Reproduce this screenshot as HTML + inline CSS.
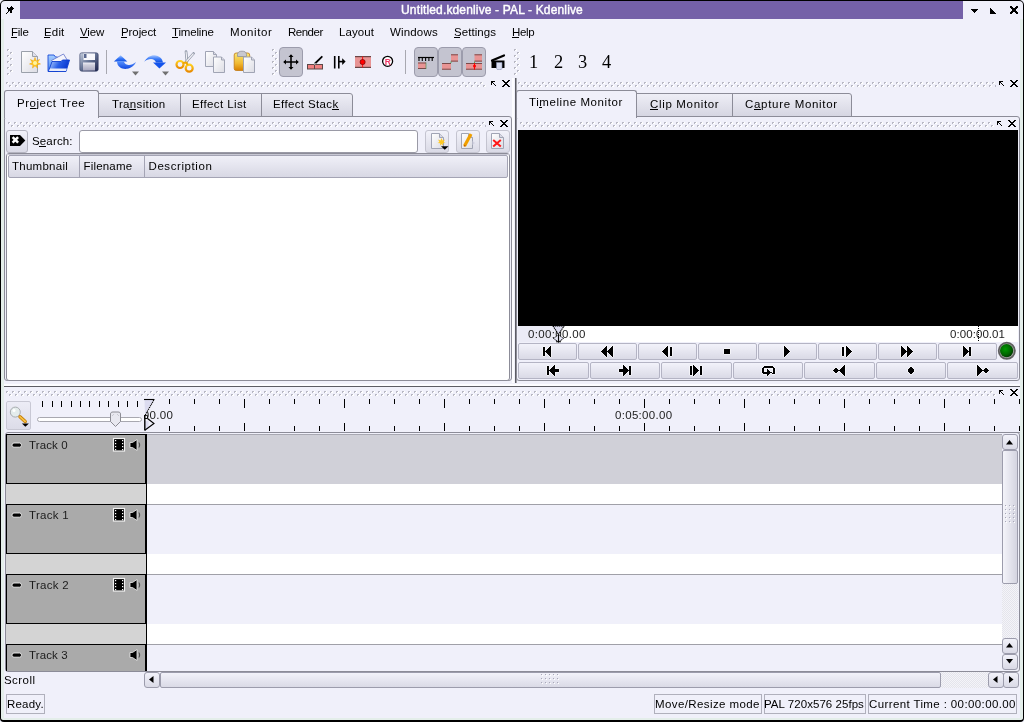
<!DOCTYPE html><html><head><meta charset="utf-8"><style>
html,body{margin:0;padding:0;}body{width:1024px;height:722px;overflow:hidden;position:relative;background:#f0f0fa;font-family:"Liberation Sans", sans-serif;}
div,svg{position:absolute;}
.t{white-space:nowrap;}
.btn{box-sizing:border-box;border:1px solid #a8a8b8;border-radius:2px;background:linear-gradient(#f2f2fa,#dadae6);}
.tab{box-sizing:border-box;border:1px solid #8c8c98;background:linear-gradient(#eeeef6,#d6d6e2);}
</style></head><body><div id="root" style="left:0;top:0;width:1024px;height:722px;overflow:hidden;will-change:transform;">
<svg width="0" height="0" style="position:absolute">
<defs>
<pattern id="dh" width="6" height="6" patternUnits="userSpaceOnUse">
<path d="M0 0h2v1h-1v1h-1z" fill="#b8b8c4"/><path d="M1 2h2v-2h-1v1h-1z" fill="#ffffff"/>
<path d="M3 3h2v1h-1v1h-1z" fill="#b8b8c4"/><path d="M4 5h2v-2h-1v1h-1z" fill="#ffffff"/>
</pattern>
<pattern id="chk" width="2" height="2" patternUnits="userSpaceOnUse">
<rect width="2" height="2" fill="#f4f4f8"/><rect width="1" height="1" fill="#e4e4ec"/><rect x="1" y="1" width="1" height="1" fill="#e4e4ec"/>
</pattern>
<pattern id="grip" width="4" height="4" patternUnits="userSpaceOnUse">
<rect width="1" height="1" fill="#a8a8b8"/><rect x="1" y="1" width="1" height="1" fill="#fff"/>
</pattern>
<linearGradient id="gBlue" x1="0" y1="0" x2="0" y2="1"><stop offset="0" stop-color="#a8c8ff"/><stop offset="0.5" stop-color="#3c7cf8"/><stop offset="1" stop-color="#1050e0"/></linearGradient>
<linearGradient id="gBlue2" x1="0" y1="0" x2="0" y2="1"><stop offset="0" stop-color="#5a94ff"/><stop offset="1" stop-color="#1048e0"/></linearGradient>
<linearGradient id="gFback" x1="0" y1="0" x2="0" y2="1"><stop offset="0" stop-color="#a8d0ff"/><stop offset="1" stop-color="#4a86f0"/></linearGradient>
<linearGradient id="gFront" x1="0" y1="0" x2="1" y2="0.3"><stop offset="0" stop-color="#c8e0ff"/><stop offset="0.55" stop-color="#2a60e8"/><stop offset="1" stop-color="#0a38d0"/></linearGradient>
<linearGradient id="gDisk" x1="0" y1="0" x2="1" y2="1"><stop offset="0" stop-color="#c8d0e0"/><stop offset="0.45" stop-color="#6a7898"/><stop offset="1" stop-color="#1a2048"/></linearGradient>
<linearGradient id="gShut" x1="0" y1="0" x2="0" y2="1"><stop offset="0" stop-color="#f0f0f8"/><stop offset="0.3" stop-color="#d0d0dc"/><stop offset="1" stop-color="#a8a8c0"/></linearGradient>
<linearGradient id="gPage" x1="0" y1="0" x2="1" y2="1"><stop offset="0" stop-color="#ffffff"/><stop offset="1" stop-color="#dcdce4"/></linearGradient>
<linearGradient id="gOrange" x1="0" y1="0" x2="0" y2="1"><stop offset="0" stop-color="#ffd020"/><stop offset="1" stop-color="#e88a00"/></linearGradient>
<linearGradient id="gClip" x1="0" y1="0" x2="0" y2="1"><stop offset="0" stop-color="#f8e878"/><stop offset="0.6" stop-color="#f0b830"/><stop offset="1" stop-color="#d88000"/></linearGradient>
<linearGradient id="gFolder" x1="0" y1="0" x2="0" y2="1"><stop offset="0" stop-color="#c8dcff"/><stop offset="0.5" stop-color="#2a6ae8"/><stop offset="1" stop-color="#a8c4f8"/></linearGradient>
<radialGradient id="gLed" cx="0.4" cy="0.38" r="0.62"><stop offset="0" stop-color="#009a00"/><stop offset="0.7" stop-color="#006400"/><stop offset="1" stop-color="#003c00"/></radialGradient>
</defs></svg>
<div style="position:absolute;left:20px;top:1px;width:943px;height:18px;background:#7561a8;"></div>
<div class="t" style="left:401px;top:4px;font-size:12px;line-height:12px;color:#fff;letter-spacing:0.152px;-webkit-text-stroke:0.4px #fff;">Untitled.kdenlive - PAL - Kdenlive</div>
<svg style="position:absolute;left:6px;top:6px" width="8" height="8" shape-rendering="crispEdges"><path d="M5 0h1v1h-1zM1 1h1v1h-1zM4 1h3v1h-3zM1 2h7v1h-7zM2 3h5v1h-5zM2 4h4v1h-4zM2 5h1v1h-1zM4 5h2v1h-2zM1 6h1v1h-1zM4 6h2v1h-2zM0 7h1v1h-1z" fill="#000"/></svg>
<svg style="position:absolute;left:971px;top:9px" width="7" height="4" shape-rendering="crispEdges"><path d="M0 0h7v1h-7zM1 1h5v1h-5zM2 2h3v1h-3zM3 3h1v1h-1z" fill="#000"/></svg>
<svg style="position:absolute;left:990px;top:8px" width="6" height="6" shape-rendering="crispEdges"><path d="M0 0h1v1h-1zM0 1h2v1h-2zM0 2h3v1h-3zM0 3h4v1h-4zM0 4h5v1h-5zM0 5h6v1h-6z" fill="#000"/></svg>
<svg style="position:absolute;left:1010px;top:6px" width="8" height="8" shape-rendering="crispEdges"><path d="M0 0h2v1h-2zM6 0h2v1h-2zM0 1h3v1h-3zM5 1h3v1h-3zM1 2h6v1h-6zM2 3h4v1h-4zM2 4h4v1h-4zM1 5h6v1h-6zM0 6h3v1h-3zM5 6h3v1h-3zM0 7h2v1h-2zM6 7h2v1h-2z" fill="#000"/></svg>
<div class="t" style="left:11px;top:27px;font-size:11.5px;line-height:11.5px;color:#000;letter-spacing:-0.25px;">File</div>
<div style="position:absolute;left:11px;top:37px;width:6px;height:1px;background:#000;"></div>
<div class="t" style="left:44px;top:27px;font-size:11.5px;line-height:11.5px;color:#000;letter-spacing:0.167px;">Edit</div>
<div style="position:absolute;left:44px;top:37px;width:6px;height:1px;background:#000;"></div>
<div class="t" style="left:80px;top:27px;font-size:11.5px;line-height:11.5px;color:#000;letter-spacing:-0.167px;">View</div>
<div style="position:absolute;left:80px;top:37px;width:8px;height:1px;background:#000;"></div>
<div class="t" style="left:121px;top:27px;font-size:11.5px;line-height:11.5px;color:#000;letter-spacing:-0.083px;">Project</div>
<div style="position:absolute;left:121px;top:37px;width:6px;height:1px;background:#000;"></div>
<div class="t" style="left:172px;top:27px;font-size:11.5px;line-height:11.5px;color:#000;letter-spacing:-0.179px;">Timeline</div>
<div style="position:absolute;left:172px;top:37px;width:6px;height:1px;background:#000;"></div>
<div class="t" style="left:230px;top:27px;font-size:11.5px;line-height:11.5px;color:#000;letter-spacing:0.567px;">Monitor</div>
<div class="t" style="left:288px;top:27px;font-size:11.5px;line-height:11.5px;color:#000;letter-spacing:-0.5px;">Render</div>
<div class="t" style="left:339px;top:27px;font-size:11.5px;line-height:11.5px;color:#000;letter-spacing:0.1px;">Layout</div>
<div class="t" style="left:390px;top:27px;font-size:11.5px;line-height:11.5px;color:#000;letter-spacing:0.167px;">Windows</div>
<div class="t" style="left:454px;top:27px;font-size:11.5px;line-height:11.5px;color:#000;letter-spacing:0.071px;">Settings</div>
<div style="position:absolute;left:454px;top:37px;width:6px;height:1px;background:#000;"></div>
<div class="t" style="left:512px;top:27px;font-size:11.5px;line-height:11.5px;color:#000;letter-spacing:-0.333px;">Help</div>
<div style="position:absolute;left:512px;top:37px;width:7px;height:1px;background:#000;"></div>
<svg style="position:absolute;left:7px;top:49px" width="6" height="27"><rect width="6" height="27" fill="url(#dh)"/></svg>
<svg style="position:absolute;left:272px;top:49px" width="6" height="27"><rect width="6" height="27" fill="url(#dh)"/></svg>
<svg style="position:absolute;left:514px;top:49px" width="6" height="27"><rect width="6" height="27" fill="url(#dh)"/></svg>
<div style="position:absolute;left:106px;top:50px;width:1px;height:24px;background:#a8a8b0;"></div>
<div style="position:absolute;left:405px;top:50px;width:1px;height:24px;background:#a8a8b0;"></div>
<div style="position:absolute;left:279px;top:47px;width:24px;height:30px;box-sizing:border-box;border:1px solid #9c9cac;border-radius:4px;background:#c4c4d0;"></div>
<div style="position:absolute;left:414px;top:47px;width:24px;height:30px;box-sizing:border-box;border:1px solid #9c9cac;border-radius:4px;background:#c4c4d0;"></div>
<div style="position:absolute;left:438px;top:47px;width:24px;height:30px;box-sizing:border-box;border:1px solid #9c9cac;border-radius:4px;background:#c4c4d0;"></div>
<div style="position:absolute;left:462px;top:47px;width:24px;height:30px;box-sizing:border-box;border:1px solid #9c9cac;border-radius:4px;background:#c4c4d0;"></div>
<div class="t" style="left:529px;top:53px;font-size:18.4px;line-height:18.4px;color:#000;letter-spacing:0px;font-family:'Liberation Serif',serif;">1</div>
<div class="t" style="left:554px;top:53px;font-size:18.4px;line-height:18.4px;color:#000;letter-spacing:0px;font-family:'Liberation Serif',serif;">2</div>
<div class="t" style="left:578px;top:53px;font-size:18.4px;line-height:18.4px;color:#000;letter-spacing:0px;font-family:'Liberation Serif',serif;">3</div>
<div class="t" style="left:602px;top:53px;font-size:18.4px;line-height:18.4px;color:#000;letter-spacing:0px;font-family:'Liberation Serif',serif;">4</div>
<svg style="position:absolute;left:20px;top:50px;" width="22" height="24" viewBox="0 0 22 24"><path d="M1.5 1.5H12.5L17.5 6.5V22.5H1.5Z" fill="url(#gPage)" stroke="#9aa0aa"/><path d="M12.5 1.5V6.5H17.5" fill="#e0e0ec" stroke="#9aa0aa"/><g transform="translate(15 13)"><path d="M0 -5.5L1.2 -2 4.5 -3.5 2.5 -0.5 5.5 1 2 1.8 2.5 5 0 2.8 -2.5 5 -2 1.8 -5.5 1 -2.5 -0.5 -4.5 -3.5 -1.2 -2Z" fill="#ffc820" stroke="#f0a000" stroke-width="0.5"/><circle r="2" fill="#fff4a0"/></g></svg>
<svg style="position:absolute;left:47px;top:52px;" width="25" height="22" viewBox="0 0 25 22"><path d="M1 3H7L8.5 5H10.5V19.5H1Z" fill="url(#gFback)" stroke="#1a4ad8" stroke-width="0.9"/><path d="M4.5 8.5L16.5 2L20.5 8.5L10 14Z" fill="#f4f4fc" stroke="#6070c8" stroke-width="0.8"/><path d="M5 9.5H14L15.5 8H22.5L19 19.5H1.5Z" fill="url(#gFront)" stroke="#1040d0" stroke-width="0.9"/><path d="M3 16.5H19.8L19 19H2Z" fill="#e8ecfa"/></svg>
<svg style="position:absolute;left:79px;top:52px;" width="21" height="21" viewBox="0 0 21 21"><rect x="0.8" y="0.8" width="18.4" height="18.4" rx="2" fill="url(#gDisk)" stroke="#303a60" stroke-width="0.6"/><rect x="4.5" y="1.5" width="11.5" height="6.5" fill="#f8f8fc"/><rect x="5" y="2" width="2.5" height="4" fill="#5a6890"/><rect x="4" y="10.5" width="12" height="8" fill="url(#gShut)"/></svg>
<svg style="position:absolute;left:113px;top:54px;" width="24" height="16" viewBox="0 0 24 16"><path d="M0.9 7.5L7.6 1.2L14.3 7.5Z" fill="url(#gBlue)"/><path d="M4 7.2C4 13 9.5 15.5 14 14.8C18 14.2 21.5 11.5 23 8C20 10.5 17 11.5 14.5 10.8C12 10 11 8.5 11 7.2Z" fill="url(#gBlue2)"/></svg>
<svg style="position:absolute;left:132px;top:71px;" width="8" height="5" viewBox="0 0 8 5"><path d="M0 0.5H7L3.5 4.5Z" fill="#707070"/></svg>
<svg style="position:absolute;left:143px;top:54px;" width="24" height="16" viewBox="0 0 24 16"><path d="M10 8.4H23L16.4 14.5Z" fill="#1454ec"/><path d="M1.2 7.8C4 3 8 1 11.5 1.2C16 1.5 19.5 4.5 20 8.6H13C12.5 6.5 10.5 5 8 5C5.5 5 3 6 1.2 7.8Z" fill="url(#gBlue)"/></svg>
<svg style="position:absolute;left:162px;top:71px;" width="8" height="5" viewBox="0 0 8 5"><path d="M0 0.5H7L3.5 4.5Z" fill="#707070"/></svg>
<svg style="position:absolute;left:175px;top:50px;" width="20" height="24" viewBox="0 0 20 24"><path d="M11 1.5L12 11.5" stroke="#8890a0" stroke-width="2.6" stroke-linecap="round"/><path d="M11 1.5L12 11.5" stroke="#f0f0f4" stroke-width="1.2"/><path d="M18.5 3.5L11 12" stroke="#8890a0" stroke-width="2.6" stroke-linecap="round"/><path d="M18.5 3.5L11 12" stroke="#f0f0f4" stroke-width="1.2"/><circle cx="5" cy="14.5" r="3.5" fill="none" stroke="url(#gOrange)" stroke-width="2.2"/><circle cx="14.2" cy="18.2" r="3.5" fill="none" stroke="url(#gOrange)" stroke-width="2.2"/><path d="M8 13L11.5 12.5L12.5 15" stroke="#f0a800" stroke-width="2" fill="none"/></svg>
<svg style="position:absolute;left:204px;top:50px;" width="23" height="24" viewBox="0 0 23 24"><path d="M1.5 1.5H9.5L12.5 4.5V16.5H1.5Z" fill="url(#gPage)" stroke="#a0a4b4"/><path d="M9.5 1.5V4.5H12.5" fill="#d8d8e4" stroke="#a0a4b4"/><path d="M9.5 7.0H17.5L20.5 10.0V22.5H9.5Z" fill="url(#gPage)" stroke="#a0a4b4"/><path d="M17.5 7.0V10.0H20.5" fill="#d8d8e4" stroke="#a0a4b4"/></svg>
<svg style="position:absolute;left:233px;top:50px;" width="24" height="24" viewBox="0 0 24 24"><rect x="1.2" y="3" width="15.5" height="17.5" rx="2" fill="url(#gClip)" stroke="#c07810" stroke-width="0.8"/><path d="M4.5 6.5V4.5C4.5 2 6.5 1.2 9 1.2C11.5 1.2 13.5 2 13.5 4.5V6.5Z" fill="#c8c8d0" stroke="#909098" stroke-width="0.8"/><path d="M10.5 7.0H18.5L21.5 10.0V22.5H10.5Z" fill="url(#gPage)" stroke="#a0a4b4"/><path d="M18.5 7.0V10.0H21.5" fill="#d8d8e4" stroke="#a0a4b4"/></svg>
<svg style="position:absolute;left:283px;top:54px;" width="16" height="16" viewBox="0 0 16 16"><path d="M8 1V15M1 8H15" stroke="#000" stroke-width="1.6"/><path d="M8 0.2L10.5 3H5.5Z M8 15.8L10.5 13H5.5Z M0.2 8L3 5.5V10.5Z M15.8 8L13 5.5V10.5Z" fill="#000"/></svg>
<svg style="position:absolute;left:306px;top:55px;" width="18" height="15" viewBox="0 0 18 15"><rect x="1.5" y="9.5" width="15" height="4.5" fill="#f08080" stroke="#5a4848"/><path d="M8.5 9.5V14" stroke="#5a4848"/><path d="M9 8.5L15.8 1.8" stroke="#000" stroke-width="1.8" stroke-linecap="round"/><path d="M8.3 9.5L9.5 8.2" stroke="#d0d0d0" stroke-width="1.5"/></svg>
<svg style="position:absolute;left:333px;top:55px;" width="14" height="15" viewBox="0 0 14 15"><path d="M1.7 1V13.5M5.8 1V13.5" stroke="#000" stroke-width="1.6"/><path d="M5.8 6.6H10" stroke="#000" stroke-width="1.6"/><path d="M9.2 3.3L12.6 6.6L9.2 9.9Z" fill="#000"/></svg>
<svg style="position:absolute;left:354px;top:55px;" width="18" height="14" viewBox="0 0 18 14"><rect x="1" y="1" width="16" height="12" fill="#e89494"/><rect x="1" y="1" width="16" height="1.2" fill="#6a4444"/><rect x="1" y="11.8" width="16" height="1.2" fill="#6a4444"/><path d="M8.6 1.5V12.5" stroke="#ff1010" stroke-width="1"/><circle cx="8.6" cy="7" r="2.6" fill="#ff0000" stroke="#600000" stroke-width="0.6"/></svg>
<svg style="position:absolute;left:381px;top:55px;" width="14" height="14" viewBox="0 0 14 14"><circle cx="6.6" cy="6.3" r="5" fill="#fff" stroke="#000" stroke-width="1.3"/><text x="6.8" y="9.6" font-family="Liberation Sans" font-size="8.5" font-weight="bold" fill="#f03868" text-anchor="middle">R</text></svg>
<svg style="position:absolute;left:417px;top:56px;" width="18" height="14" viewBox="0 0 18 14"><path d="M1 1.5H17" stroke="#000" stroke-width="1.2"/><path d="M2.0 1.5V5" stroke="#000" stroke-width="1.1"/><path d="M5.3 1.5V5" stroke="#000" stroke-width="1.1"/><path d="M8.6 1.5V5" stroke="#000" stroke-width="1.1"/><path d="M11.899999999999999 1.5V5" stroke="#000" stroke-width="1.1"/><path d="M15.2 1.5V5" stroke="#000" stroke-width="1.1"/><rect x="1" y="6.5" width="8" height="6.5" fill="#e89494"/><rect x="1" y="6.5" width="8" height="1" fill="#7a4a4a"/><rect x="1" y="12.0" width="8" height="1" fill="#7a4a4a"/><path d="M9 6.5V13" stroke="#409040" stroke-width="0.6"/></svg>
<svg style="position:absolute;left:441px;top:54px;" width="18" height="16" viewBox="0 0 18 16"><rect x="10" y="0.3" width="7" height="7.3" fill="#e89494"/><rect x="10" y="0.3" width="7" height="1" fill="#7a4a4a"/><rect x="10" y="6.6" width="7" height="1" fill="#7a4a4a"/><rect x="1" y="9" width="9" height="6.7" fill="#e89494"/><rect x="1" y="9" width="9" height="1" fill="#7a4a4a"/><rect x="1" y="14.7" width="9" height="1" fill="#7a4a4a"/><path d="M10 7.5V9" stroke="#40a040" stroke-width="0.8"/></svg>
<svg style="position:absolute;left:465px;top:54px;" width="18" height="16" viewBox="0 0 18 16"><rect x="9.5" y="0.3" width="7.5" height="7.3" fill="#e89494"/><rect x="9.5" y="0.3" width="7.5" height="1" fill="#7a4a4a"/><rect x="9.5" y="6.6" width="7.5" height="1" fill="#7a4a4a"/><rect x="1" y="9" width="16" height="6.7" fill="#e89494"/><rect x="1" y="9" width="16" height="1" fill="#7a4a4a"/><rect x="1" y="14.7" width="16" height="1" fill="#7a4a4a"/><path d="M9.5 7.5V9" stroke="#40a040" stroke-width="0.8"/><path d="M9.5 9V15.7" stroke="#ff0000" stroke-width="1"/><circle cx="9.5" cy="12" r="1.5" fill="#ff0000"/></svg>
<svg style="position:absolute;left:490px;top:54px;" width="16" height="16" viewBox="0 0 16 16"><path d="M2 6.5L14 1.5" stroke="#000" stroke-width="2.2" stroke-linecap="round"/><rect x="1.5" y="6.5" width="13" height="7.5" fill="#000"/><path d="M6.5 8.5h5.5v6a2.7 1.2 0 0 1 -5.5 0z" fill="#d8dcf0" stroke="#8890b0" stroke-width="0.6"/></svg>
<svg style="position:absolute;left:6px;top:82px" width="480" height="6"><rect width="480" height="6" fill="url(#dh)"/></svg>
<svg style="position:absolute;left:491px;top:81px" width="5" height="5" shape-rendering="crispEdges"><path d="M0 0h4v1h-4zM0 1h2v1h-2zM0 2h1v1h-1zM2 2h1v1h-1zM0 3h1v1h-1zM3 3h1v1h-1zM4 4h1v1h-1z" fill="#000"/></svg>
<svg style="position:absolute;left:502px;top:80px" width="8" height="7" shape-rendering="crispEdges"><path d="M0 0h2v1h-2zM6 0h2v1h-2zM1 1h2v1h-2zM5 1h2v1h-2zM2 2h4v1h-4zM3 3h2v1h-2zM2 4h4v1h-4zM1 5h2v1h-2zM5 5h2v1h-2zM0 6h2v1h-2zM6 6h2v1h-2z" fill="#000"/></svg>
<svg style="position:absolute;left:518px;top:82px" width="478" height="6"><rect width="478" height="6" fill="url(#dh)"/></svg>
<svg style="position:absolute;left:999px;top:81px" width="5" height="5" shape-rendering="crispEdges"><path d="M0 0h4v1h-4zM0 1h2v1h-2zM0 2h1v1h-1zM2 2h1v1h-1zM0 3h1v1h-1zM3 3h1v1h-1zM4 4h1v1h-1z" fill="#000"/></svg>
<svg style="position:absolute;left:1010px;top:80px" width="8" height="7" shape-rendering="crispEdges"><path d="M0 0h2v1h-2zM6 0h2v1h-2zM1 1h2v1h-2zM5 1h2v1h-2zM2 2h4v1h-4zM3 3h2v1h-2zM2 4h4v1h-4zM1 5h2v1h-2zM5 5h2v1h-2zM0 6h2v1h-2zM6 6h2v1h-2z" fill="#000"/></svg>
<div style="position:absolute;left:4px;top:116px;width:508px;height:265px;box-sizing:border-box;border:1px solid #8c8c98;border-radius:3px;"></div>
<div class="tab" style="left:97px;top:93px;width:84px;height:24px;border-left:none;"></div>
<div class="tab" style="left:180px;top:93px;width:82px;height:24px;border-left:1px solid #8c8c98;"></div>
<div class="tab" style="left:261px;top:93px;width:92px;height:24px;border-radius:0 3px 0 0;"></div>
<div style="left:4px;top:90px;width:95px;height:28px;box-sizing:border-box;border:1px solid #8c8c98;border-bottom:none;border-radius:3px 3px 0 0;background:#f0f0fa;"></div>
<div class="t" style="left:17px;top:98px;font-size:11.5px;line-height:11.5px;color:#000;letter-spacing:0.523px;">Project Tree</div>
<div style="position:absolute;left:30px;top:108px;width:6px;height:1px;background:#000;"></div>
<div class="t" style="left:112px;top:99px;font-size:11.5px;line-height:11.5px;color:#000;letter-spacing:0.344px;">Transition</div>
<div style="position:absolute;left:129px;top:109px;width:7px;height:1px;background:#000;"></div>
<div class="t" style="left:192px;top:99px;font-size:11.5px;line-height:11.5px;color:#000;letter-spacing:0.4px;">Effect List</div>
<div class="t" style="left:273px;top:99px;font-size:11.5px;line-height:11.5px;color:#000;letter-spacing:0.364px;">Effect Stack</div>
<div style="position:absolute;left:332px;top:109px;width:7px;height:1px;background:#000;"></div>
<svg style="position:absolute;left:8px;top:122px" width="478" height="6"><rect width="478" height="6" fill="url(#dh)"/></svg>
<svg style="position:absolute;left:489px;top:121px" width="5" height="5" shape-rendering="crispEdges"><path d="M0 0h4v1h-4zM0 1h2v1h-2zM0 2h1v1h-1zM2 2h1v1h-1zM0 3h1v1h-1zM3 3h1v1h-1zM4 4h1v1h-1z" fill="#000"/></svg>
<svg style="position:absolute;left:500px;top:120px" width="8" height="7" shape-rendering="crispEdges"><path d="M0 0h2v1h-2zM6 0h2v1h-2zM1 1h2v1h-2zM5 1h2v1h-2zM2 2h4v1h-4zM3 3h2v1h-2zM2 4h4v1h-4zM1 5h2v1h-2zM5 5h2v1h-2zM0 6h2v1h-2zM6 6h2v1h-2z" fill="#000"/></svg>
<div class="btn" style="left:6px;top:130px;width:22px;height:23px;border-radius:3px;border-color:#b4b4c0;"></div>
<svg style="position:absolute;left:10px;top:135px;" width="16" height="12" viewBox="0 0 16 12"><path d="M0 0H10L15.3 5.5L10 11H0Z" fill="#000"/><path d="M2.6 2.1L8.1 7.7M8.1 2.1L2.6 7.7" stroke="#fff" stroke-width="2.5"/></svg>
<div class="t" style="left:32px;top:136px;font-size:11.5px;line-height:11.5px;color:#000;letter-spacing:0.15px;">Search:</div>
<div style="position:absolute;left:39px;top:146px;width:7px;height:1px;background:#000;"></div>
<div style="position:absolute;left:79px;top:130px;width:339px;height:23px;box-sizing:border-box;border:1px solid #9a9aa6;border-radius:3px;background:#fff;"></div>
<div class="btn" style="left:425px;top:130px;width:24px;height:23px;border-radius:3px;border-color:#c4c4d0;"></div>
<div class="btn" style="left:456px;top:130px;width:24px;height:23px;border-radius:3px;border-color:#c4c4d0;"></div>
<div class="btn" style="left:486px;top:130px;width:24px;height:23px;border-radius:3px;border-color:#c4c4d0;"></div>
<svg style="position:absolute;left:430px;top:132px;" width="20" height="19" viewBox="0 0 20 19"><path d="M1.5 1.5H9.5L13.5 5.5V16.5H1.5Z" fill="url(#gPage)" stroke="#a0a4b4"/><path d="M9.5 1.5V5.5H13.5" fill="#d8d8e4" stroke="#a0a4b4"/><g transform="translate(11.5 10)"><path d="M0 -4L1 -1.5 3.5 -2.5 2 0 4 1 1.3 1.3 1.5 3.8 0 2 -1.5 3.8 -1.3 1.3 -4 1 -2 0 -3.5 -2.5 -1 -1.5Z" fill="#ffc820"/></g><path d="M11 14.2H18.5L14.75 17.8Z" fill="#000"/></svg>
<svg style="position:absolute;left:460px;top:132px;" width="20" height="19" viewBox="0 0 20 19"><path d="M1.5 1.5H8.5L12.5 5.5V16.5H1.5Z" fill="url(#gPage)" stroke="#a0a4b4"/><path d="M8.5 1.5V5.5H12.5" fill="#d8d8e4" stroke="#a0a4b4"/><path d="M4.5 14L11 2" stroke="#f0a000" stroke-width="3.2"/><path d="M4.3 14.5L5 13" stroke="#c06000" stroke-width="1.5"/><path d="M12.5 9L15 11L12.5 13" fill="#d0d0e0"/></svg>
<svg style="position:absolute;left:490px;top:132px;" width="18" height="19" viewBox="0 0 18 19"><path d="M1.5 1.5H9.5L13.5 5.5V16.5H1.5Z" fill="url(#gPage)" stroke="#a0a4b4"/><path d="M9.5 1.5V5.5H13.5" fill="#d8d8e4" stroke="#a0a4b4"/><path d="M3.2 8L10.8 14.5M10.8 8L3.2 14.5" stroke="#ff1818" stroke-width="2"/></svg>
<div style="position:absolute;left:6px;top:153px;width:504px;height:228px;box-sizing:border-box;border:1px solid #8c8c98;border-radius:3px;background:#fff;"></div>
<div style="position:absolute;left:7px;top:154px;width:502px;height:1px;background:#c8c8d4;"></div>
<div style="left:8px;top:155px;width:500px;height:23px;box-sizing:border-box;background:linear-gradient(#f0f0f8,#d8d8e4);border:1px solid #a4a4b4;border-radius:2px;"></div>
<div style="position:absolute;left:79px;top:156px;width:1px;height:21px;background:#a4a4b4;"></div>
<div style="position:absolute;left:144px;top:156px;width:1px;height:21px;background:#a4a4b4;"></div>
<div class="t" style="left:12px;top:161px;font-size:11.5px;line-height:11.5px;color:#000;letter-spacing:0.263px;">Thumbnail</div>
<div class="t" style="left:83.5px;top:161px;font-size:11.5px;line-height:11.5px;color:#000;letter-spacing:0.179px;">Filename</div>
<div class="t" style="left:148.5px;top:161px;font-size:11.5px;line-height:11.5px;color:#000;letter-spacing:0.575px;">Description</div>
<div style="position:absolute;left:512px;top:78px;width:2px;height:305px;background:#fcfcff;"></div>
<div style="position:absolute;left:515px;top:78px;width:1px;height:305px;background:#5c5c64;"></div>
<div style="position:absolute;left:516px;top:78px;width:1px;height:305px;background:#a0a0a8;"></div>
<div style="position:absolute;left:516px;top:116px;width:504px;height:265px;box-sizing:border-box;border:1px solid #8c8c98;border-radius:3px;"></div>
<div class="tab" style="left:635px;top:93px;width:98px;height:24px;border-left:none;"></div>
<div class="tab" style="left:732px;top:93px;width:120px;height:24px;border-radius:0 3px 0 0;"></div>
<div style="left:516px;top:90px;width:121px;height:28px;box-sizing:border-box;border:1px solid #8c8c98;border-bottom:none;border-radius:3px 3px 0 0;background:#f0f0fa;"></div>
<div class="t" style="left:529px;top:97px;font-size:11.5px;line-height:11.5px;color:#000;letter-spacing:0.58px;">Timeline Monitor</div>
<div style="position:absolute;left:539px;top:107px;width:3px;height:1px;background:#000;"></div>
<div class="t" style="left:650px;top:99px;font-size:11.5px;line-height:11.5px;color:#000;letter-spacing:0.664px;">Clip Monitor</div>
<div style="position:absolute;left:650px;top:109px;width:8px;height:1px;background:#000;"></div>
<div class="t" style="left:745px;top:99px;font-size:11.5px;line-height:11.5px;color:#000;letter-spacing:0.693px;">Capture Monitor</div>
<div style="position:absolute;left:754px;top:109px;width:7px;height:1px;background:#000;"></div>
<svg style="position:absolute;left:520px;top:122px" width="474" height="6"><rect width="474" height="6" fill="url(#dh)"/></svg>
<svg style="position:absolute;left:997px;top:121px" width="5" height="5" shape-rendering="crispEdges"><path d="M0 0h4v1h-4zM0 1h2v1h-2zM0 2h1v1h-1zM2 2h1v1h-1zM0 3h1v1h-1zM3 3h1v1h-1zM4 4h1v1h-1z" fill="#000"/></svg>
<svg style="position:absolute;left:1008px;top:120px" width="8" height="7" shape-rendering="crispEdges"><path d="M0 0h2v1h-2zM6 0h2v1h-2zM1 1h2v1h-2zM5 1h2v1h-2zM2 2h4v1h-4zM3 3h2v1h-2zM2 4h4v1h-4zM1 5h2v1h-2zM5 5h2v1h-2zM0 6h2v1h-2zM6 6h2v1h-2z" fill="#000"/></svg>
<div style="position:absolute;left:518px;top:130px;width:500px;height:196px;background:#000;"></div>
<div style="position:absolute;left:518px;top:326px;width:500px;height:16px;background:#fff;"></div>
<div style="position:absolute;left:518px;top:326px;width:40px;height:16px;background:#ebebf6;"></div>
<div class="t" style="left:528px;top:329px;font-size:11.5px;line-height:11.5px;color:#222;letter-spacing:0.344px;">0:00:00.00</div>
<div class="t" style="left:950px;top:329px;font-size:11.5px;line-height:11.5px;color:#222;letter-spacing:0.067px;">0:00:00.01</div>
<div style="position:absolute;left:978px;top:326px;width:1px;height:16px;background:repeating-linear-gradient(#000 0 1px,transparent 1px 2px);"></div>
<svg style="position:absolute;left:551px;top:325px;" width="15" height="18" viewBox="0 0 15 18"><path d="M2 1H13L7.5 9.5Z" fill="#dcdcf0" stroke="#000" stroke-width="1.1" stroke-dasharray="1.4 0.6"/><path d="M7.5 9.5L12.5 13.5L7.5 17L2.5 13.5Z" fill="#e4e4f4" stroke="#000" stroke-width="1" stroke-dasharray="1.4 0.6"/><path d="M7.5 9.5V17.5M5 16.8H10" stroke="#000" stroke-width="1.1"/></svg>
<div class="btn" style="left:518px;top:343px;width:59px;height:17px;border-color:#b4b4c4;"></div>
<div class="btn" style="left:578px;top:343px;width:59px;height:17px;border-color:#b4b4c4;"></div>
<div class="btn" style="left:638px;top:343px;width:59px;height:17px;border-color:#b4b4c4;"></div>
<div class="btn" style="left:698px;top:343px;width:59px;height:17px;border-color:#b4b4c4;"></div>
<div class="btn" style="left:758px;top:343px;width:59px;height:17px;border-color:#b4b4c4;"></div>
<div class="btn" style="left:818px;top:343px;width:59px;height:17px;border-color:#b4b4c4;"></div>
<div class="btn" style="left:878px;top:343px;width:59px;height:17px;border-color:#b4b4c4;"></div>
<div class="btn" style="left:938px;top:343px;width:59px;height:17px;border-color:#b4b4c4;"></div>
<div class="btn" style="left:518px;top:362px;width:71px;height:17px;border-color:#b4b4c4;"></div>
<div class="btn" style="left:590px;top:362px;width:70px;height:17px;border-color:#b4b4c4;"></div>
<div class="btn" style="left:661px;top:362px;width:71px;height:17px;border-color:#b4b4c4;"></div>
<div class="btn" style="left:733px;top:362px;width:70px;height:17px;border-color:#b4b4c4;"></div>
<div class="btn" style="left:804px;top:362px;width:71px;height:17px;border-color:#b4b4c4;"></div>
<div class="btn" style="left:876px;top:362px;width:70px;height:17px;border-color:#b4b4c4;"></div>
<div class="btn" style="left:947px;top:362px;width:71px;height:17px;border-color:#b4b4c4;"></div>
<svg style="position:absolute;left:997px;top:341px;" width="20" height="20" viewBox="0 0 20 20"><circle cx="9.8" cy="9.8" r="8.1" fill="#a8a8a8" stroke="#606060" stroke-width="1.8"/><circle cx="9.6" cy="9.7" r="6.6" fill="url(#gLed)"/></svg>
<svg style="position:absolute;left:542px;top:345px" width="10" height="13" shape-rendering="crispEdges"><path d="M8 0h1v1h-1zM1 1h2v1h-2zM7 1h3v1h-3zM0 2h4v1h-4zM6 2h4v1h-4zM0 3h4v1h-4zM5 3h5v1h-5zM0 4h10v1h-10zM0 5h10v1h-10zM0 6h10v1h-10zM0 7h10v1h-10zM0 8h10v1h-10zM0 9h4v1h-4zM5 9h5v1h-5zM0 10h4v1h-4zM6 10h4v1h-4zM1 11h2v1h-2zM7 11h3v1h-3zM8 12h1v1h-1z" fill="rgba(255,255,255,0.55)"/></svg>
<svg style="position:absolute;left:543px;top:346px" width="8" height="11" shape-rendering="crispEdges"><path d="M7 0h1v1h-1zM0 1h2v1h-2zM6 1h2v1h-2zM0 2h2v1h-2zM5 2h3v1h-3zM0 3h2v1h-2zM4 3h4v1h-4zM0 4h2v1h-2zM3 4h5v1h-5zM0 5h8v1h-8zM0 6h2v1h-2zM3 6h5v1h-5zM0 7h2v1h-2zM4 7h4v1h-4zM0 8h2v1h-2zM5 8h3v1h-3zM0 9h2v1h-2zM6 9h2v1h-2zM7 10h1v1h-1z" fill="#000"/></svg>
<svg style="position:absolute;left:600px;top:345px" width="14" height="13" shape-rendering="crispEdges"><path d="M6 0h1v1h-1zM12 0h1v1h-1zM5 1h3v1h-3zM11 1h3v1h-3zM4 2h4v1h-4zM10 2h4v1h-4zM3 3h5v1h-5zM9 3h5v1h-5zM2 4h12v1h-12zM1 5h13v1h-13zM0 6h14v1h-14zM1 7h13v1h-13zM2 8h12v1h-12zM3 9h5v1h-5zM9 9h5v1h-5zM4 10h4v1h-4zM10 10h4v1h-4zM5 11h3v1h-3zM11 11h3v1h-3zM6 12h1v1h-1zM12 12h1v1h-1z" fill="rgba(255,255,255,0.55)"/></svg>
<svg style="position:absolute;left:601px;top:346px" width="12" height="11" shape-rendering="crispEdges"><path d="M5 0h1v1h-1zM11 0h1v1h-1zM4 1h2v1h-2zM10 1h2v1h-2zM3 2h3v1h-3zM9 2h3v1h-3zM2 3h4v1h-4zM8 3h4v1h-4zM1 4h5v1h-5zM7 4h5v1h-5zM0 5h12v1h-12zM1 6h5v1h-5zM7 6h5v1h-5zM2 7h4v1h-4zM8 7h4v1h-4zM3 8h3v1h-3zM9 8h3v1h-3zM4 9h2v1h-2zM10 9h2v1h-2zM5 10h1v1h-1zM11 10h1v1h-1z" fill="#000"/></svg>
<svg style="position:absolute;left:661px;top:345px" width="12" height="13" shape-rendering="crispEdges"><path d="M6 0h1v1h-1zM5 1h3v1h-3zM9 1h2v1h-2zM4 2h8v1h-8zM3 3h9v1h-9zM2 4h10v1h-10zM1 5h11v1h-11zM0 6h12v1h-12zM1 7h11v1h-11zM2 8h10v1h-10zM3 9h9v1h-9zM4 10h8v1h-8zM5 11h3v1h-3zM9 11h2v1h-2zM6 12h1v1h-1z" fill="rgba(255,255,255,0.55)"/></svg>
<svg style="position:absolute;left:662px;top:346px" width="10" height="11" shape-rendering="crispEdges"><path d="M5 0h1v1h-1zM4 1h2v1h-2zM8 1h2v1h-2zM3 2h3v1h-3zM8 2h2v1h-2zM2 3h4v1h-4zM8 3h2v1h-2zM1 4h5v1h-5zM8 4h2v1h-2zM0 5h6v1h-6zM8 5h2v1h-2zM1 6h5v1h-5zM8 6h2v1h-2zM2 7h4v1h-4zM8 7h2v1h-2zM3 8h3v1h-3zM8 8h2v1h-2zM4 9h2v1h-2zM8 9h2v1h-2zM5 10h1v1h-1z" fill="#000"/></svg>
<svg style="position:absolute;left:723px;top:348px" width="8" height="7" shape-rendering="crispEdges"><path d="M1 0h6v1h-6zM0 1h8v1h-8zM0 2h8v1h-8zM0 3h8v1h-8zM0 4h8v1h-8zM0 5h8v1h-8zM1 6h6v1h-6z" fill="rgba(255,255,255,0.55)"/></svg>
<svg style="position:absolute;left:724px;top:349px" width="6" height="5" shape-rendering="crispEdges"><path d="M0 0h6v1h-6zM0 1h6v1h-6zM0 2h6v1h-6zM0 3h6v1h-6zM0 4h6v1h-6z" fill="#000"/></svg>
<svg style="position:absolute;left:783px;top:345px" width="8" height="13" shape-rendering="crispEdges"><path d="M1 0h1v1h-1zM0 1h3v1h-3zM0 2h4v1h-4zM0 3h5v1h-5zM0 4h6v1h-6zM0 5h7v1h-7zM0 6h8v1h-8zM0 7h7v1h-7zM0 8h6v1h-6zM0 9h5v1h-5zM0 10h4v1h-4zM0 11h3v1h-3zM1 12h1v1h-1z" fill="rgba(255,255,255,0.55)"/></svg>
<svg style="position:absolute;left:784px;top:346px" width="6" height="11" shape-rendering="crispEdges"><path d="M0 0h1v1h-1zM0 1h2v1h-2zM0 2h3v1h-3zM0 3h4v1h-4zM0 4h5v1h-5zM0 5h6v1h-6zM0 6h5v1h-5zM0 7h4v1h-4zM0 8h3v1h-3zM0 9h2v1h-2zM0 10h1v1h-1z" fill="#000"/></svg>
<svg style="position:absolute;left:841px;top:345px" width="12" height="13" shape-rendering="crispEdges"><path d="M5 0h1v1h-1zM1 1h2v1h-2zM4 1h3v1h-3zM0 2h8v1h-8zM0 3h9v1h-9zM0 4h10v1h-10zM0 5h11v1h-11zM0 6h12v1h-12zM0 7h11v1h-11zM0 8h10v1h-10zM0 9h9v1h-9zM0 10h8v1h-8zM1 11h2v1h-2zM4 11h3v1h-3zM5 12h1v1h-1z" fill="rgba(255,255,255,0.55)"/></svg>
<svg style="position:absolute;left:842px;top:346px" width="10" height="11" shape-rendering="crispEdges"><path d="M4 0h1v1h-1zM0 1h2v1h-2zM4 1h2v1h-2zM0 2h2v1h-2zM4 2h3v1h-3zM0 3h2v1h-2zM4 3h4v1h-4zM0 4h2v1h-2zM4 4h5v1h-5zM0 5h2v1h-2zM4 5h6v1h-6zM0 6h2v1h-2zM4 6h5v1h-5zM0 7h2v1h-2zM4 7h4v1h-4zM0 8h2v1h-2zM4 8h3v1h-3zM0 9h2v1h-2zM4 9h2v1h-2zM4 10h1v1h-1z" fill="#000"/></svg>
<svg style="position:absolute;left:900px;top:345px" width="14" height="13" shape-rendering="crispEdges"><path d="M1 0h1v1h-1zM7 0h1v1h-1zM0 1h3v1h-3zM6 1h3v1h-3zM0 2h4v1h-4zM6 2h4v1h-4zM0 3h5v1h-5zM6 3h5v1h-5zM0 4h12v1h-12zM0 5h13v1h-13zM0 6h14v1h-14zM0 7h13v1h-13zM0 8h12v1h-12zM0 9h5v1h-5zM6 9h5v1h-5zM0 10h4v1h-4zM6 10h4v1h-4zM0 11h3v1h-3zM6 11h3v1h-3zM1 12h1v1h-1zM7 12h1v1h-1z" fill="rgba(255,255,255,0.55)"/></svg>
<svg style="position:absolute;left:901px;top:346px" width="12" height="11" shape-rendering="crispEdges"><path d="M0 0h1v1h-1zM6 0h1v1h-1zM0 1h2v1h-2zM6 1h2v1h-2zM0 2h3v1h-3zM6 2h3v1h-3zM0 3h4v1h-4zM6 3h4v1h-4zM0 4h5v1h-5zM6 4h5v1h-5zM0 5h12v1h-12zM0 6h5v1h-5zM6 6h5v1h-5zM0 7h4v1h-4zM6 7h4v1h-4zM0 8h3v1h-3zM6 8h3v1h-3zM0 9h2v1h-2zM6 9h2v1h-2zM0 10h1v1h-1zM6 10h1v1h-1z" fill="#000"/></svg>
<svg style="position:absolute;left:962px;top:345px" width="10" height="13" shape-rendering="crispEdges"><path d="M1 0h1v1h-1zM0 1h3v1h-3zM7 1h2v1h-2zM0 2h4v1h-4zM6 2h4v1h-4zM0 3h5v1h-5zM6 3h4v1h-4zM0 4h10v1h-10zM0 5h10v1h-10zM0 6h10v1h-10zM0 7h10v1h-10zM0 8h10v1h-10zM0 9h5v1h-5zM6 9h4v1h-4zM0 10h4v1h-4zM6 10h4v1h-4zM0 11h3v1h-3zM7 11h2v1h-2zM1 12h1v1h-1z" fill="rgba(255,255,255,0.55)"/></svg>
<svg style="position:absolute;left:963px;top:346px" width="8" height="11" shape-rendering="crispEdges"><path d="M0 0h1v1h-1zM0 1h2v1h-2zM6 1h2v1h-2zM0 2h3v1h-3zM6 2h2v1h-2zM0 3h4v1h-4zM6 3h2v1h-2zM0 4h5v1h-5zM6 4h2v1h-2zM0 5h8v1h-8zM0 6h5v1h-5zM6 6h2v1h-2zM0 7h4v1h-4zM6 7h2v1h-2zM0 8h3v1h-3zM6 8h2v1h-2zM0 9h2v1h-2zM6 9h2v1h-2zM0 10h1v1h-1z" fill="#000"/></svg>
<svg style="position:absolute;left:546px;top:364px" width="14" height="13" shape-rendering="crispEdges"><path d="M8 0h1v1h-1zM1 1h2v1h-2zM7 1h3v1h-3zM0 2h4v1h-4zM6 2h4v1h-4zM0 3h4v1h-4zM5 3h5v1h-5zM0 4h13v1h-13zM0 5h14v1h-14zM0 6h14v1h-14zM0 7h14v1h-14zM0 8h13v1h-13zM0 9h4v1h-4zM5 9h5v1h-5zM0 10h4v1h-4zM6 10h4v1h-4zM1 11h2v1h-2zM7 11h3v1h-3zM8 12h1v1h-1z" fill="rgba(255,255,255,0.55)"/></svg>
<svg style="position:absolute;left:547px;top:365px" width="12" height="11" shape-rendering="crispEdges"><path d="M7 0h1v1h-1zM0 1h2v1h-2zM6 1h2v1h-2zM0 2h2v1h-2zM5 2h3v1h-3zM0 3h2v1h-2zM4 3h4v1h-4zM0 4h2v1h-2zM3 4h9v1h-9zM0 5h12v1h-12zM0 6h2v1h-2zM3 6h9v1h-9zM0 7h2v1h-2zM4 7h4v1h-4zM0 8h2v1h-2zM5 8h3v1h-3zM0 9h2v1h-2zM6 9h2v1h-2zM7 10h1v1h-1z" fill="#000"/></svg>
<svg style="position:absolute;left:618px;top:364px" width="14" height="13" shape-rendering="crispEdges"><path d="M5 0h1v1h-1zM4 1h3v1h-3zM11 1h2v1h-2zM4 2h4v1h-4zM10 2h4v1h-4zM4 3h5v1h-5zM10 3h4v1h-4zM1 4h13v1h-13zM0 5h14v1h-14zM0 6h14v1h-14zM0 7h14v1h-14zM1 8h13v1h-13zM4 9h5v1h-5zM10 9h4v1h-4zM4 10h4v1h-4zM10 10h4v1h-4zM4 11h3v1h-3zM11 11h2v1h-2zM5 12h1v1h-1z" fill="rgba(255,255,255,0.55)"/></svg>
<svg style="position:absolute;left:619px;top:365px" width="12" height="11" shape-rendering="crispEdges"><path d="M4 0h1v1h-1zM4 1h2v1h-2zM10 1h2v1h-2zM4 2h3v1h-3zM10 2h2v1h-2zM4 3h4v1h-4zM10 3h2v1h-2zM0 4h9v1h-9zM10 4h2v1h-2zM0 5h12v1h-12zM0 6h9v1h-9zM10 6h2v1h-2zM4 7h4v1h-4zM10 7h2v1h-2zM4 8h3v1h-3zM10 8h2v1h-2zM4 9h2v1h-2zM10 9h2v1h-2zM4 10h1v1h-1z" fill="#000"/></svg>
<svg style="position:absolute;left:689px;top:364px" width="14" height="13" shape-rendering="crispEdges"><path d="M4 0h1v1h-1zM1 1h5v1h-5zM11 1h2v1h-2zM0 2h7v1h-7zM10 2h4v1h-4zM0 3h8v1h-8zM10 3h4v1h-4zM0 4h9v1h-9zM10 4h4v1h-4zM0 5h14v1h-14zM0 6h14v1h-14zM0 7h14v1h-14zM0 8h9v1h-9zM10 8h4v1h-4zM0 9h8v1h-8zM10 9h4v1h-4zM0 10h7v1h-7zM10 10h4v1h-4zM1 11h5v1h-5zM11 11h2v1h-2zM4 12h1v1h-1z" fill="rgba(255,255,255,0.55)"/></svg>
<svg style="position:absolute;left:690px;top:365px" width="12" height="11" shape-rendering="crispEdges"><path d="M3 0h1v1h-1zM0 1h2v1h-2zM3 1h2v1h-2zM10 1h2v1h-2zM0 2h2v1h-2zM3 2h3v1h-3zM10 2h2v1h-2zM0 3h2v1h-2zM3 3h4v1h-4zM10 3h2v1h-2zM0 4h2v1h-2zM3 4h5v1h-5zM10 4h2v1h-2zM0 5h2v1h-2zM3 5h6v1h-6zM10 5h2v1h-2zM0 6h2v1h-2zM3 6h5v1h-5zM10 6h2v1h-2zM0 7h2v1h-2zM3 7h4v1h-4zM10 7h2v1h-2zM0 8h2v1h-2zM3 8h3v1h-3zM10 8h2v1h-2zM0 9h2v1h-2zM3 9h2v1h-2zM10 9h2v1h-2zM3 10h1v1h-1z" fill="#000"/></svg>
<svg style="position:absolute;left:761px;top:365px" width="15" height="12" shape-rendering="crispEdges"><path d="M3 0h9v1h-9zM2 1h11v1h-11zM1 2h13v1h-13zM0 3h15v1h-15zM0 4h4v1h-4zM5 4h3v1h-3zM11 4h4v1h-4zM0 5h4v1h-4zM5 5h4v1h-4zM11 5h4v1h-4zM0 6h15v1h-15zM0 7h15v1h-15zM1 8h14v1h-14zM2 9h7v1h-7zM11 9h3v1h-3zM5 10h3v1h-3zM6 11h1v1h-1z" fill="rgba(255,255,255,0.55)"/></svg>
<svg style="position:absolute;left:762px;top:366px" width="13" height="10" shape-rendering="crispEdges"><path d="M2 0h9v1h-9zM1 1h11v1h-11zM0 2h2v1h-2zM11 2h2v1h-2zM0 3h2v1h-2zM5 3h1v1h-1zM11 3h2v1h-2zM0 4h2v1h-2zM5 4h2v1h-2zM11 4h2v1h-2zM0 5h2v1h-2zM5 5h3v1h-3zM11 5h2v1h-2zM0 6h10v1h-10zM11 6h2v1h-2zM1 7h7v1h-7zM10 7h3v1h-3zM5 8h2v1h-2zM5 9h1v1h-1z" fill="#000"/></svg>
<svg style="position:absolute;left:832px;top:364px" width="14" height="13" shape-rendering="crispEdges"><path d="M12 0h1v1h-1zM11 1h3v1h-3zM10 2h4v1h-4zM3 3h2v1h-2zM9 3h5v1h-5zM2 4h4v1h-4zM8 4h6v1h-6zM1 5h13v1h-13zM0 6h14v1h-14zM1 7h13v1h-13zM2 8h4v1h-4zM8 8h6v1h-6zM3 9h2v1h-2zM9 9h5v1h-5zM10 10h4v1h-4zM11 11h3v1h-3zM12 12h1v1h-1z" fill="rgba(255,255,255,0.55)"/></svg>
<svg style="position:absolute;left:833px;top:365px" width="12" height="11" shape-rendering="crispEdges"><path d="M11 0h1v1h-1zM10 1h2v1h-2zM9 2h3v1h-3zM2 3h2v1h-2zM8 3h4v1h-4zM1 4h4v1h-4zM7 4h5v1h-5zM0 5h12v1h-12zM1 6h4v1h-4zM7 6h5v1h-5zM2 7h2v1h-2zM8 7h4v1h-4zM9 8h3v1h-3zM10 9h2v1h-2zM11 10h1v1h-1z" fill="#000"/></svg>
<svg style="position:absolute;left:907px;top:366px" width="8" height="9" shape-rendering="crispEdges"><path d="M3 0h2v1h-2zM2 1h4v1h-4zM1 2h6v1h-6zM0 3h8v1h-8zM0 4h8v1h-8zM0 5h8v1h-8zM1 6h6v1h-6zM2 7h4v1h-4zM3 8h2v1h-2z" fill="rgba(255,255,255,0.55)"/></svg>
<svg style="position:absolute;left:908px;top:367px" width="6" height="7" shape-rendering="crispEdges"><path d="M2 0h2v1h-2zM1 1h4v1h-4zM0 2h6v1h-6zM0 3h6v1h-6zM0 4h6v1h-6zM1 5h4v1h-4zM2 6h2v1h-2z" fill="#000"/></svg>
<svg style="position:absolute;left:976px;top:364px" width="14" height="13" shape-rendering="crispEdges"><path d="M1 0h1v1h-1zM0 1h3v1h-3zM0 2h4v1h-4zM0 3h5v1h-5zM9 3h2v1h-2zM0 4h6v1h-6zM8 4h4v1h-4zM0 5h13v1h-13zM0 6h14v1h-14zM0 7h13v1h-13zM0 8h6v1h-6zM8 8h4v1h-4zM0 9h5v1h-5zM9 9h2v1h-2zM0 10h4v1h-4zM0 11h3v1h-3zM1 12h1v1h-1z" fill="rgba(255,255,255,0.55)"/></svg>
<svg style="position:absolute;left:977px;top:365px" width="12" height="11" shape-rendering="crispEdges"><path d="M0 0h1v1h-1zM0 1h2v1h-2zM0 2h3v1h-3zM0 3h4v1h-4zM8 3h2v1h-2zM0 4h5v1h-5zM7 4h4v1h-4zM0 5h12v1h-12zM0 6h5v1h-5zM7 6h4v1h-4zM0 7h4v1h-4zM8 7h2v1h-2zM0 8h3v1h-3zM0 9h2v1h-2zM0 10h1v1h-1z" fill="#000"/></svg>
<div style="position:absolute;left:0px;top:384px;width:1024px;height:2px;background:#fcfcff;"></div>
<div style="position:absolute;left:0px;top:386px;width:1024px;height:1px;background:#5c5c64;"></div>
<svg style="position:absolute;left:6px;top:391px" width="990" height="6"><rect width="990" height="6" fill="url(#dh)"/></svg>
<svg style="position:absolute;left:999px;top:390px" width="5" height="5" shape-rendering="crispEdges"><path d="M0 0h4v1h-4zM0 1h2v1h-2zM0 2h1v1h-1zM2 2h1v1h-1zM0 3h1v1h-1zM3 3h1v1h-1zM4 4h1v1h-1z" fill="#000"/></svg>
<svg style="position:absolute;left:1010px;top:389px" width="8" height="7" shape-rendering="crispEdges"><path d="M0 0h2v1h-2zM6 0h2v1h-2zM1 1h2v1h-2zM5 1h2v1h-2zM2 2h4v1h-4zM3 3h2v1h-2zM2 4h4v1h-4zM1 5h2v1h-2zM5 5h2v1h-2zM0 6h2v1h-2zM6 6h2v1h-2z" fill="#000"/></svg>
<div class="btn" style="left:6px;top:401px;width:25px;height:29px;border-color:#c8c8d4;border-radius:2px;background:linear-gradient(#ececf6,#dcdce8);"></div>
<svg style="position:absolute;left:9px;top:405px;" width="22" height="23" viewBox="0 0 22 23"><circle cx="6.3" cy="7.1" r="5" fill="#e4ecec" stroke="#a8acb0" stroke-width="1"/><circle cx="5" cy="5.5" r="1.5" fill="#fff"/><path d="M11 11.8L16.2 16.5" stroke="#c07800" stroke-width="3.4" stroke-linecap="round"/><path d="M11 11.8L16.2 16.5" stroke="#f8c040" stroke-width="1.8" stroke-linecap="round"/><path d="M12.9 18.4H19.9L16.4 21.8Z" fill="#000"/></svg>
<div style="position:absolute;left:42px;top:401px;width:1px;height:6px;background:#000;"></div>
<div style="position:absolute;left:52px;top:401px;width:1px;height:6px;background:#000;"></div>
<div style="position:absolute;left:61px;top:401px;width:1px;height:6px;background:#000;"></div>
<div style="position:absolute;left:71px;top:401px;width:1px;height:6px;background:#000;"></div>
<div style="position:absolute;left:80px;top:401px;width:1px;height:6px;background:#000;"></div>
<div style="position:absolute;left:89px;top:401px;width:1px;height:6px;background:#000;"></div>
<div style="position:absolute;left:99px;top:401px;width:1px;height:6px;background:#000;"></div>
<div style="position:absolute;left:108px;top:401px;width:1px;height:6px;background:#000;"></div>
<div style="position:absolute;left:118px;top:401px;width:1px;height:6px;background:#000;"></div>
<div style="position:absolute;left:127px;top:401px;width:1px;height:6px;background:#000;"></div>
<div style="position:absolute;left:137px;top:401px;width:1px;height:6px;background:#000;"></div>
<div style="position:absolute;left:37px;top:417px;width:105px;height:5px;box-sizing:border-box;border:1px solid #a8a8b0;border-radius:3px;background:#fff;"></div>
<svg style="position:absolute;left:109px;top:411px;" width="14" height="17" viewBox="0 0 14 17"><path d="M1.5 3C1.5 1.5 2.5 1 4 1H9C10.5 1 11.5 1.5 11.5 3V10.5L6.5 15.5L1.5 10.5Z" fill="#e8e8f0" stroke="#8c8c94"/><path d="M3.5 4.5L4.5 3.5M8.5 3.5L9.5 4.5" stroke="#a0a0a8" stroke-width="0.9"/></svg>
<div style="position:absolute;left:169px;top:399px;width:1px;height:5px;background:#000;"></div>
<div style="position:absolute;left:169px;top:426px;width:1px;height:5px;background:#000;"></div>
<div style="position:absolute;left:194px;top:399px;width:1px;height:5px;background:#000;"></div>
<div style="position:absolute;left:194px;top:426px;width:1px;height:5px;background:#000;"></div>
<div style="position:absolute;left:219px;top:399px;width:1px;height:5px;background:#000;"></div>
<div style="position:absolute;left:219px;top:426px;width:1px;height:5px;background:#000;"></div>
<div style="position:absolute;left:244px;top:399px;width:1px;height:9px;background:#000;"></div>
<div style="position:absolute;left:244px;top:423px;width:1px;height:8px;background:#000;"></div>
<div style="position:absolute;left:269px;top:399px;width:1px;height:5px;background:#000;"></div>
<div style="position:absolute;left:269px;top:426px;width:1px;height:5px;background:#000;"></div>
<div style="position:absolute;left:294px;top:399px;width:1px;height:5px;background:#000;"></div>
<div style="position:absolute;left:294px;top:426px;width:1px;height:5px;background:#000;"></div>
<div style="position:absolute;left:319px;top:399px;width:1px;height:5px;background:#000;"></div>
<div style="position:absolute;left:319px;top:426px;width:1px;height:5px;background:#000;"></div>
<div style="position:absolute;left:344px;top:399px;width:1px;height:9px;background:#000;"></div>
<div style="position:absolute;left:344px;top:423px;width:1px;height:8px;background:#000;"></div>
<div style="position:absolute;left:369px;top:399px;width:1px;height:5px;background:#000;"></div>
<div style="position:absolute;left:369px;top:426px;width:1px;height:5px;background:#000;"></div>
<div style="position:absolute;left:394px;top:399px;width:1px;height:5px;background:#000;"></div>
<div style="position:absolute;left:394px;top:426px;width:1px;height:5px;background:#000;"></div>
<div style="position:absolute;left:419px;top:399px;width:1px;height:5px;background:#000;"></div>
<div style="position:absolute;left:419px;top:426px;width:1px;height:5px;background:#000;"></div>
<div style="position:absolute;left:444px;top:399px;width:1px;height:9px;background:#000;"></div>
<div style="position:absolute;left:444px;top:423px;width:1px;height:8px;background:#000;"></div>
<div style="position:absolute;left:469px;top:399px;width:1px;height:5px;background:#000;"></div>
<div style="position:absolute;left:469px;top:426px;width:1px;height:5px;background:#000;"></div>
<div style="position:absolute;left:494px;top:399px;width:1px;height:5px;background:#000;"></div>
<div style="position:absolute;left:494px;top:426px;width:1px;height:5px;background:#000;"></div>
<div style="position:absolute;left:519px;top:399px;width:1px;height:5px;background:#000;"></div>
<div style="position:absolute;left:519px;top:426px;width:1px;height:5px;background:#000;"></div>
<div style="position:absolute;left:544px;top:399px;width:1px;height:9px;background:#000;"></div>
<div style="position:absolute;left:544px;top:423px;width:1px;height:8px;background:#000;"></div>
<div style="position:absolute;left:569px;top:399px;width:1px;height:5px;background:#000;"></div>
<div style="position:absolute;left:569px;top:426px;width:1px;height:5px;background:#000;"></div>
<div style="position:absolute;left:594px;top:399px;width:1px;height:5px;background:#000;"></div>
<div style="position:absolute;left:594px;top:426px;width:1px;height:5px;background:#000;"></div>
<div style="position:absolute;left:619px;top:399px;width:1px;height:5px;background:#000;"></div>
<div style="position:absolute;left:619px;top:426px;width:1px;height:5px;background:#000;"></div>
<div style="position:absolute;left:644px;top:399px;width:1px;height:9px;background:#000;"></div>
<div style="position:absolute;left:644px;top:423px;width:1px;height:8px;background:#000;"></div>
<div style="position:absolute;left:669px;top:399px;width:1px;height:5px;background:#000;"></div>
<div style="position:absolute;left:669px;top:426px;width:1px;height:5px;background:#000;"></div>
<div style="position:absolute;left:694px;top:399px;width:1px;height:5px;background:#000;"></div>
<div style="position:absolute;left:694px;top:426px;width:1px;height:5px;background:#000;"></div>
<div style="position:absolute;left:719px;top:399px;width:1px;height:5px;background:#000;"></div>
<div style="position:absolute;left:719px;top:426px;width:1px;height:5px;background:#000;"></div>
<div style="position:absolute;left:744px;top:399px;width:1px;height:9px;background:#000;"></div>
<div style="position:absolute;left:744px;top:423px;width:1px;height:8px;background:#000;"></div>
<div style="position:absolute;left:769px;top:399px;width:1px;height:5px;background:#000;"></div>
<div style="position:absolute;left:769px;top:426px;width:1px;height:5px;background:#000;"></div>
<div style="position:absolute;left:794px;top:399px;width:1px;height:5px;background:#000;"></div>
<div style="position:absolute;left:794px;top:426px;width:1px;height:5px;background:#000;"></div>
<div style="position:absolute;left:819px;top:399px;width:1px;height:5px;background:#000;"></div>
<div style="position:absolute;left:819px;top:426px;width:1px;height:5px;background:#000;"></div>
<div style="position:absolute;left:844px;top:399px;width:1px;height:9px;background:#000;"></div>
<div style="position:absolute;left:844px;top:423px;width:1px;height:8px;background:#000;"></div>
<div style="position:absolute;left:869px;top:399px;width:1px;height:5px;background:#000;"></div>
<div style="position:absolute;left:869px;top:426px;width:1px;height:5px;background:#000;"></div>
<div style="position:absolute;left:894px;top:399px;width:1px;height:5px;background:#000;"></div>
<div style="position:absolute;left:894px;top:426px;width:1px;height:5px;background:#000;"></div>
<div style="position:absolute;left:919px;top:399px;width:1px;height:5px;background:#000;"></div>
<div style="position:absolute;left:919px;top:426px;width:1px;height:5px;background:#000;"></div>
<div style="position:absolute;left:944px;top:399px;width:1px;height:9px;background:#000;"></div>
<div style="position:absolute;left:944px;top:423px;width:1px;height:8px;background:#000;"></div>
<div style="position:absolute;left:969px;top:399px;width:1px;height:5px;background:#000;"></div>
<div style="position:absolute;left:969px;top:426px;width:1px;height:5px;background:#000;"></div>
<div style="position:absolute;left:994px;top:399px;width:1px;height:5px;background:#000;"></div>
<div style="position:absolute;left:994px;top:426px;width:1px;height:5px;background:#000;"></div>
<div style="position:absolute;left:1019px;top:399px;width:1px;height:5px;background:#000;"></div>
<div style="position:absolute;left:1019px;top:426px;width:1px;height:5px;background:#000;"></div>
<div style="left:145px;top:405px;width:40px;height:16px;overflow:hidden;"><div class="t" style="left:-29.5px;top:5px;font-size:11.5px;line-height:11.5px;color:#222;letter-spacing:0.344px;">0:00:00.00</div></div>
<div class="t" style="left:615px;top:410px;font-size:11.5px;line-height:11.5px;color:#222;letter-spacing:0.306px;">0:05:00.00</div>
<svg style="position:absolute;left:143px;top:398px;" width="13" height="34" viewBox="0 0 13 34"><path d="M1.5 1.5H10.5L2 17Z" fill="#dcdcf0"/><rect x="2" y="23" width="3.5" height="8" fill="#dcdcf0"/><path d="M1 1.5H11.5" stroke="#000" stroke-width="1.1"/><path d="M10.8 2L2 17.5" stroke="#000" stroke-width="1.1" stroke-dasharray="1.3 0.7"/><path d="M1.8 17V32.5" stroke="#000" stroke-width="1.4"/><path d="M1.5 17.5h3v3h-3z" fill="none" stroke="#000" stroke-width="0.8"/><path d="M4.5 20.5L11 25.5L1.8 32.3" stroke="#000" stroke-width="1.1" fill="none"/></svg>
<div style="position:absolute;left:144px;top:432px;width:876px;height:1px;background:#9898a4;"></div>
<div style="position:absolute;left:5px;top:432px;width:1015px;height:240px;box-sizing:border-box;border:1px solid #8c8c98;border-radius:3px;"></div>
<div style="position:absolute;left:146px;top:434px;width:856px;height:50px;background:#d0d0d8;"></div>
<div style="position:absolute;left:146px;top:434px;width:856px;height:1px;background:#a8a8b2;"></div>
<div style="position:absolute;left:146px;top:484px;width:856px;height:20px;background:#fff;"></div>
<div style="position:absolute;left:6px;top:483px;width:141px;height:21px;background:#d4d4d4;border-right:1px solid #000;box-sizing:border-box;"></div>
<div style="position:absolute;left:6px;top:434px;width:141px;height:50px;box-sizing:border-box;border:1px solid #000;border-right-width:2px;background:#aaaaaa;"></div>
<div class="t" style="left:29px;top:440px;font-size:11.5px;line-height:11.5px;color:#1c1c1c;letter-spacing:0.117px;">Track 0</div>
<svg style="position:absolute;left:11px;top:442px;" width="12" height="7" viewBox="0 0 12 7"><rect x="1" y="1" width="9.5" height="4.2" rx="2" fill="#000" stroke="#f0f0f0" stroke-width="0.9"/></svg>
<svg style="position:absolute;left:112px;top:437px;" width="14" height="15" viewBox="0 0 14 15"><rect x="1.5" y="1.5" width="11" height="12.5" fill="#000" stroke="#f0f0f0" stroke-width="1.2"/><rect x="3" y="3" width="1.2" height="1.2" fill="#fff"/><rect x="10" y="3" width="1.2" height="1.2" fill="#fff"/><rect x="3" y="6" width="1.2" height="1.2" fill="#fff"/><rect x="10" y="6" width="1.2" height="1.2" fill="#fff"/><rect x="3" y="9" width="1.2" height="1.2" fill="#fff"/><rect x="10" y="9" width="1.2" height="1.2" fill="#fff"/><rect x="3" y="12" width="1.2" height="1.2" fill="#fff"/><rect x="10" y="12" width="1.2" height="1.2" fill="#fff"/></svg>
<svg style="position:absolute;left:129px;top:439px;" width="14" height="13" viewBox="0 0 14 13"><path d="M1 3.5H3.5L8 0.5V11.5L3.5 8.5H1Z" fill="#000" stroke="#f0f0f0" stroke-width="0.8"/><path d="M10 3.5Q11.5 6 10 8.5" stroke="#303030" stroke-width="0.8" fill="none"/></svg>
<div style="position:absolute;left:146px;top:504px;width:856px;height:50px;background:#f0f0fa;"></div>
<div style="position:absolute;left:146px;top:504px;width:856px;height:1px;background:#a0a0a8;"></div>
<div style="position:absolute;left:146px;top:554px;width:856px;height:20px;background:#fff;"></div>
<div style="position:absolute;left:6px;top:553px;width:141px;height:21px;background:#d4d4d4;border-right:1px solid #000;box-sizing:border-box;"></div>
<div style="position:absolute;left:6px;top:504px;width:141px;height:50px;box-sizing:border-box;border:1px solid #000;border-right-width:2px;background:#aaaaaa;"></div>
<div class="t" style="left:29px;top:510px;font-size:11.5px;line-height:11.5px;color:#1c1c1c;letter-spacing:0.283px;">Track 1</div>
<svg style="position:absolute;left:11px;top:512px;" width="12" height="7" viewBox="0 0 12 7"><rect x="1" y="1" width="9.5" height="4.2" rx="2" fill="#000" stroke="#f0f0f0" stroke-width="0.9"/></svg>
<svg style="position:absolute;left:112px;top:507px;" width="14" height="15" viewBox="0 0 14 15"><rect x="1.5" y="1.5" width="11" height="12.5" fill="#000" stroke="#f0f0f0" stroke-width="1.2"/><rect x="3" y="3" width="1.2" height="1.2" fill="#fff"/><rect x="10" y="3" width="1.2" height="1.2" fill="#fff"/><rect x="3" y="6" width="1.2" height="1.2" fill="#fff"/><rect x="10" y="6" width="1.2" height="1.2" fill="#fff"/><rect x="3" y="9" width="1.2" height="1.2" fill="#fff"/><rect x="10" y="9" width="1.2" height="1.2" fill="#fff"/><rect x="3" y="12" width="1.2" height="1.2" fill="#fff"/><rect x="10" y="12" width="1.2" height="1.2" fill="#fff"/></svg>
<svg style="position:absolute;left:129px;top:509px;" width="14" height="13" viewBox="0 0 14 13"><path d="M1 3.5H3.5L8 0.5V11.5L3.5 8.5H1Z" fill="#000" stroke="#f0f0f0" stroke-width="0.8"/><path d="M10 3.5Q11.5 6 10 8.5" stroke="#303030" stroke-width="0.8" fill="none"/></svg>
<div style="position:absolute;left:146px;top:574px;width:856px;height:50px;background:#f0f0fa;"></div>
<div style="position:absolute;left:146px;top:574px;width:856px;height:1px;background:#a0a0a8;"></div>
<div style="position:absolute;left:146px;top:624px;width:856px;height:20px;background:#fff;"></div>
<div style="position:absolute;left:6px;top:623px;width:141px;height:21px;background:#d4d4d4;border-right:1px solid #000;box-sizing:border-box;"></div>
<div style="position:absolute;left:6px;top:574px;width:141px;height:50px;box-sizing:border-box;border:1px solid #000;border-right-width:2px;background:#aaaaaa;"></div>
<div class="t" style="left:29px;top:580px;font-size:11.5px;line-height:11.5px;color:#1c1c1c;letter-spacing:0.283px;">Track 2</div>
<svg style="position:absolute;left:11px;top:582px;" width="12" height="7" viewBox="0 0 12 7"><rect x="1" y="1" width="9.5" height="4.2" rx="2" fill="#000" stroke="#f0f0f0" stroke-width="0.9"/></svg>
<svg style="position:absolute;left:112px;top:577px;" width="14" height="15" viewBox="0 0 14 15"><rect x="1.5" y="1.5" width="11" height="12.5" fill="#000" stroke="#f0f0f0" stroke-width="1.2"/><rect x="3" y="3" width="1.2" height="1.2" fill="#fff"/><rect x="10" y="3" width="1.2" height="1.2" fill="#fff"/><rect x="3" y="6" width="1.2" height="1.2" fill="#fff"/><rect x="10" y="6" width="1.2" height="1.2" fill="#fff"/><rect x="3" y="9" width="1.2" height="1.2" fill="#fff"/><rect x="10" y="9" width="1.2" height="1.2" fill="#fff"/><rect x="3" y="12" width="1.2" height="1.2" fill="#fff"/><rect x="10" y="12" width="1.2" height="1.2" fill="#fff"/></svg>
<svg style="position:absolute;left:129px;top:579px;" width="14" height="13" viewBox="0 0 14 13"><path d="M1 3.5H3.5L8 0.5V11.5L3.5 8.5H1Z" fill="#000" stroke="#f0f0f0" stroke-width="0.8"/><path d="M10 3.5Q11.5 6 10 8.5" stroke="#303030" stroke-width="0.8" fill="none"/></svg>
<div style="position:absolute;left:146px;top:644px;width:856px;height:26px;background:#f0f0fa;"></div>
<div style="position:absolute;left:146px;top:644px;width:856px;height:1px;background:#a0a0a8;"></div>
<div style="position:absolute;left:6px;top:644px;width:141px;height:27px;box-sizing:border-box;border:1px solid #000;border-right-width:2px;background:#aaaaaa;border-bottom:none;"></div>
<div class="t" style="left:29px;top:650px;font-size:11.5px;line-height:11.5px;color:#1c1c1c;letter-spacing:0.117px;">Track 3</div>
<svg style="position:absolute;left:11px;top:652px;" width="12" height="7" viewBox="0 0 12 7"><rect x="1" y="1" width="9.5" height="4.2" rx="2" fill="#000" stroke="#f0f0f0" stroke-width="0.9"/></svg>
<svg style="position:absolute;left:129px;top:649px;" width="14" height="13" viewBox="0 0 14 13"><path d="M1 3.5H3.5L8 0.5V11.5L3.5 8.5H1Z" fill="#000" stroke="#f0f0f0" stroke-width="0.8"/><path d="M10 3.5Q11.5 6 10 8.5" stroke="#303030" stroke-width="0.8" fill="none"/></svg>
<div class="btn" style="left:1002px;top:434px;width:16px;height:16px;border-radius:3px;border-color:#9c9cac;"></div>
<div class="btn" style="left:1002px;top:450px;width:16px;height:134px;border-radius:2px;border-color:#9c9cac;background:linear-gradient(90deg,#f4f4fa,#d4d4e0);"></div>
<svg style="position:absolute;left:1005px;top:505px;" width="12" height="20" viewBox="0 0 12 20"><rect width="12" height="20" fill="url(#grip)"/></svg>
<svg style="position:absolute;left:1002px;top:584px;" width="16" height="54" viewBox="0 0 16 54"><rect width="16" height="54" fill="url(#chk)"/></svg>
<div class="btn" style="left:1002px;top:638px;width:16px;height:16px;border-radius:3px;border-color:#9c9cac;"></div>
<div class="btn" style="left:1002px;top:654px;width:16px;height:16px;border-radius:3px;border-color:#9c9cac;"></div>
<svg style="position:absolute;left:1006px;top:440px;" width="8" height="5" viewBox="0 0 8 5"><path d="M0 4.5H7L3.5 0Z" fill="#000"/></svg>
<svg style="position:absolute;left:1006px;top:643px;" width="8" height="5" viewBox="0 0 8 5"><path d="M0 4.5H7L3.5 0Z" fill="#000"/></svg>
<svg style="position:absolute;left:1006px;top:659px;" width="8" height="5" viewBox="0 0 8 5"><path d="M0 0H7L3.5 4.5Z" fill="#000"/></svg>
<div class="t" style="left:4px;top:675px;font-size:11.5px;line-height:11.5px;color:#000;letter-spacing:0.45px;">Scroll</div>
<div class="btn" style="left:144px;top:672px;width:16px;height:16px;border-radius:3px;border-color:#9c9cac;"></div>
<div class="btn" style="left:160px;top:672px;width:781px;height:16px;border-color:#9c9cac;"></div>
<svg style="position:absolute;left:541px;top:674px;" width="18" height="12" viewBox="0 0 18 12"><rect width="18" height="12" fill="url(#grip)"/></svg>
<svg style="position:absolute;left:941px;top:672px;" width="47" height="16" viewBox="0 0 47 16"><rect width="47" height="16" fill="url(#chk)"/></svg>
<div class="btn" style="left:988px;top:672px;width:16px;height:16px;border-radius:3px;border-color:#9c9cac;"></div>
<div class="btn" style="left:1003px;top:672px;width:16px;height:16px;border-radius:3px;border-color:#9c9cac;"></div>
<svg style="position:absolute;left:149px;top:676px;" width="5" height="8" viewBox="0 0 5 8"><path d="M4.5 0V7L0 3.5Z" fill="#000"/></svg>
<svg style="position:absolute;left:993px;top:676px;" width="5" height="8" viewBox="0 0 5 8"><path d="M4.5 0V7L0 3.5Z" fill="#000"/></svg>
<svg style="position:absolute;left:1009px;top:676px;" width="5" height="8" viewBox="0 0 5 8"><path d="M0 0V7L4.5 3.5Z" fill="#000"/></svg>
<div style="position:absolute;left:6px;top:694px;width:39px;height:20px;box-sizing:border-box;border:1px solid #b0b0bc;"></div>
<div class="t" style="left:7px;top:699px;font-size:11.5px;line-height:11.5px;color:#000;letter-spacing:0.2px;">Ready.</div>
<div style="position:absolute;left:654px;top:694px;width:108px;height:20px;box-sizing:border-box;border:1px solid #b0b0bc;"></div>
<div class="t" style="left:655px;top:699px;font-size:11.5px;line-height:11.5px;color:#000;letter-spacing:0.4px;">Move/Resize mode</div>
<div style="position:absolute;left:764px;top:694px;width:102px;height:20px;box-sizing:border-box;border:1px solid #b0b0bc;"></div>
<div class="t" style="left:764px;top:699px;font-size:11.5px;line-height:11.5px;color:#000;letter-spacing:0.047px;">PAL 720x576 25fps</div>
<div style="position:absolute;left:868px;top:694px;width:149px;height:20px;box-sizing:border-box;border:1px solid #b0b0bc;"></div>
<div class="t" style="left:869px;top:699px;font-size:11.5px;line-height:11.5px;color:#000;letter-spacing:0.386px;">Current Time : 00:00:00.00</div>
<div style="position:absolute;left:1px;top:19px;width:3px;height:700px;background:#e4eeea;"></div>
<div style="position:absolute;left:1020px;top:19px;width:3px;height:700px;background:#e4eeea;"></div>
<div style="position:absolute;left:1px;top:718px;width:1022px;height:2px;background:#e4eeea;"></div>
<div style="position:absolute;left:0px;top:0px;width:1024px;height:722px;box-sizing:border-box;border:1px solid #000;border-radius:5px 5px 4px 4px;border-bottom-width:2px;"></div>
</div></body></html>
